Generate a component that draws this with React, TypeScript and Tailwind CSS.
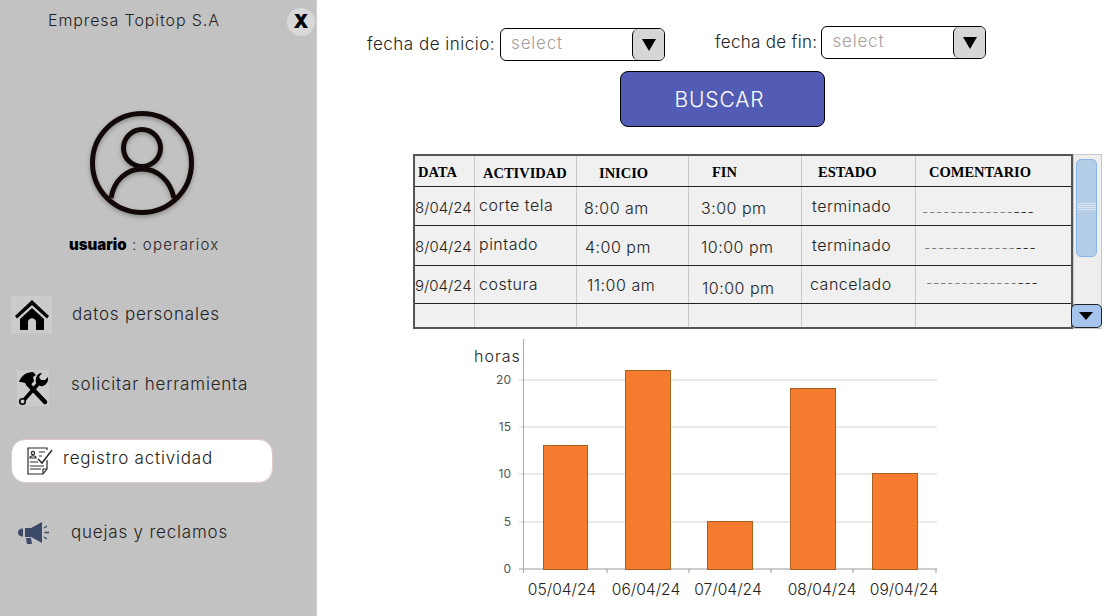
const font = "font-['Inter',sans-serif]";

const rows = [
  { date: "8/04/24", act: "corte tela", ini: "8:00 am", fin: "3:00 pm", est: "terminado", h: "h-[39px]", dash: "pl-[6px] pt-[10px]", actPos: "pl-[4px] pb-[2px]", iniPos: "pl-[7px] pt-[4px]", finPos: "pl-[12px] pt-[4px]", estPos: "pl-[10px]" },
  { date: "8/04/24", act: "pintado", ini: "4:00 pm", fin: "10:00 pm", est: "terminado", h: "h-[40px]", dash: "pl-[8px] pt-[4px]", actPos: "pl-[4px] pb-[4px]", iniPos: "pl-[8px] pt-[2px]", finPos: "pl-[12px] pt-[2px]", estPos: "pl-[10px] pb-[1px]" },
  { date: "9/04/24", act: "costura", ini: "11:00 am", fin: "10:00 pm", est: "cancelado", h: "h-[38px]", dash: "pl-[10px] pb-[4px]", actPos: "pl-[4px] pb-[2px]", iniPos: "pl-[10px] pt-[1px]", finPos: "pl-[13px] pt-[6px]", estPos: "pl-[8px] pb-[2px]" },
];

const cols = "grid grid-cols-[60px_102px_112px_113px_114px_1fr]";
const cell = "border-r border-[#c9c9c9] flex items-center";

function HomeIcon() {
  return (
    <svg viewBox="0 0 36 32" className="w-[36px] h-[32px]">
      <path d="M18 1 L1 17 L3 19.5 L18 6 L33 19.5 L35 17 Z" fill="#000" />
      <path d="M6 20 L18 9 L30 20 V31 H22 V23 C22 18 14 18 14 23 V31 H6 Z" fill="#000" />
    </svg>
  );
}

function ToolsIcon() {
  return (
    <svg viewBox="0 0 32 36" className="w-[32px] h-[36px]">
      <path d="M11 14 L28 32" stroke="#000" strokeWidth="4.5" strokeLinecap="round" />
      <path d="M2 12 C4 6 9 2 16 2 L19 5 L16 7 L17 11 L12 17 L8 13 C6 12 4 12 2 12 Z" fill="#000" />
      <path d="M7 30 L22 13" stroke="#000" strokeWidth="3.6" strokeLinecap="round" />
      <circle cx="5.5" cy="31.5" r="2.8" fill="#cbcbcb" stroke="#000" strokeWidth="1.6" />
      <path d="M25 3 L22 7 L24 10 L28 10 L31 7 C32 12 28 17 23 16 L19 13 C18 8 20 3 25 3 Z" fill="#000" />
    </svg>
  );
}

function DocIcon() {
  return (
    <svg viewBox="0 0 26 28" className="w-[26px] h-[28px]" fill="none" stroke="#2b2b2b" strokeWidth="1.2">
      <path d="M20 13 V22 L16 27 H1 V1 H20 V3" />
      <path d="M16 27 V22 H20" />
      <circle cx="6" cy="6" r="1.6" />
      <path d="M3 11 C3 8 9 8 9 11 Z" />
      <path d="M12 5 H18 M12 9 H15 M3 15 H11 M3 19 H17 M3 22 H14" />
      <path d="M11 12 L15 16 L25 3" strokeWidth="1.5" />
    </svg>
  );
}

function HornIcon() {
  return (
    <svg viewBox="0 0 32 24" className="w-[32px] h-[24px]" fill="#3a4a68">
      <path d="M8 7 H14 L25 1 V22 L14 16 H8 Z" />
      <path d="M6 7.5 V15.5 C2 15.5 1 13 1 11.5 C1 10 2 7.5 6 7.5 Z" />
      <path d="M9 17 H14 L15 23 H10 Z" />
      <path d="M27 7 L30 5 M27.5 11.5 H32 M27 16 L30 18" stroke="#3a4a68" strokeWidth="1.3" />
    </svg>
  );
}

function SelectBox({ className }: { className: string }) {
  return (
    <div className={`flex w-[165px] h-[33px] rounded-[6px] border border-black bg-white overflow-hidden ${className}`}>
      <span className="flex-1 pl-[10px] text-[17px] leading-[29px] text-[#a89c9c] font-light tracking-[0.8px]">select</span>
      <span className="w-[32px] bg-[#d6d6d6] border-l border-black rounded-l-[6px] flex items-center justify-center">
        <svg viewBox="0 0 14 12" className="w-[14px] h-[12px]">
          <path d="M0 0 H14 L7 12 Z" fill="#000" />
        </svg>
      </span>
    </div>
  );
}

function Chart() {
  const ticks = [
    { v: "20", y: 380 },
    { v: "15", y: 427 },
    { v: "10", y: 474 },
    { v: "5", y: 522 },
    { v: "0", y: 569 },
  ];
  const bars = [
    { x: 543, w: 44, top: 445 },
    { x: 625, w: 45, top: 370 },
    { x: 707, w: 45, top: 521 },
    { x: 790, w: 45, top: 388 },
    { x: 872, w: 45, top: 473 },
  ];
  const labels = [
    { t: "05/04/24", x: 562 },
    { t: "06/04/24", x: 646 },
    { t: "07/04/24", x: 728 },
    { t: "08/04/24", x: 822 },
    { t: "09/04/24", x: 904 },
  ];
  return (
    <svg viewBox="465 335 490 271" className="w-[490px] h-[271px]">
      {ticks.map((t) => (
        <g key={t.v}>
          <line x1="519" x2="937" y1={t.y} y2={t.y} stroke={t.v === "0" ? "#9a9a9a" : "#d4d4d4"} strokeWidth="1" />
          <text x="511" y={t.y + 4} textAnchor="end" fontSize="12" fill="#555" fontFamily="Inter, sans-serif">{t.v}</text>
        </g>
      ))}
      <line x1="523.5" x2="523.5" y1="339" y2="573" stroke="#a8a8a8" />
      {[607, 689, 771, 853, 936].map((x) => (
        <line key={x} x1={x} x2={x} y1="569" y2="573" stroke="#9a9a9a" />
      ))}
      {bars.map((b) => (
        <rect key={b.x} x={b.x + 0.5} y={b.top + 0.5} width={b.w} height={569 - b.top} fill="#f57c2e" stroke="#a9601f" />
      ))}
      <text x="474" y="362" fontSize="16" letterSpacing="1" fill="#222" fontWeight="300" fontFamily="Inter, sans-serif">horas</text>
      {labels.map((l) => (
        <text key={l.t} x={l.x} y="595" textAnchor="middle" fontSize="15.6" fill="#222" fontWeight="300" fontFamily="Inter, sans-serif">{l.t}</text>
      ))}
    </svg>
  );
}

export default function App() {
  return (
    <div className={`flex w-[1111px] h-[616px] overflow-hidden bg-white text-[#222] ${font}`}>
      <aside className="relative w-[317px] shrink-0 h-full bg-[#c2c2c2] border-r border-[#d0d0d0] flex flex-col">
        <h1 className="pl-[48px] pt-[10px] text-[16px] leading-[20px] font-light tracking-[0.9px] whitespace-nowrap">Empresa Topitop S.A</h1>
        <button className="absolute left-[287px] top-[8px] w-[28px] h-[28px] rounded-full bg-[#d8d8d8] text-black font-black text-[19px] leading-[28px]">X</button>
        <div className="flex mt-[81px] pl-[90px]">
          <svg viewBox="0 0 104 106" className="w-[104px] h-[106px] drop-shadow-[0_2px_2px_rgba(0,0,0,0.3)]" fill="none" stroke="#120808" strokeWidth="5">
            <circle cx="52" cy="52" r="49.5" />
            <circle cx="52" cy="37" r="18.5" />
            <path d="M21 87 C24 69 37 58 52 58 C67 58 80 69 84 87" />
          </svg>
        </div>
        <div className="mt-[18px] pl-[69px] text-[15px] leading-[20px] font-light tracking-[1.2px] whitespace-nowrap">
          <b className="font-black text-black tracking-normal">usuario</b> : operariox
        </div>
        <nav className="mt-[41px] flex flex-col">
          <div className="flex items-center h-[38px] pl-[11px]">
            <span className="w-[41px] h-[38px] bg-[#cbcbcb] flex items-center justify-center"><HomeIcon /></span>
            <span className="ml-[20px] text-[17px] font-light tracking-[0.8px]">datos personales</span>
          </div>
          <div className="flex items-center h-[36px] mt-[36px] pl-[17px]">
            <span className="w-[32px] h-[36px] bg-[#cbcbcb] flex items-center justify-center"><ToolsIcon /></span>
            <span className="ml-[22px] pb-[6px] text-[17px] font-light tracking-[0.8px]">solicitar herramienta</span>
          </div>
          <div className="flex items-start h-[44px] w-[262px] mt-[33px] ml-[11px] pl-[15px] pt-[7px] bg-white rounded-[14px] border border-[#e0c8c8]">
            <DocIcon />
            <span className="ml-[10px] pt-[1px] text-[17px] leading-[20px] font-light tracking-[0.8px]">registro actividad</span>
          </div>
          <div className="flex items-center h-[24px] mt-[38px] pl-[17px]">
            <HornIcon />
            <span className="ml-[22px] text-[17px] font-light tracking-[0.8px]">quejas y reclamos</span>
          </div>
        </nav>
      </aside>

      <main className="flex-1 min-w-0 flex flex-col">
        <div className="flex items-start pt-[26px] pl-[50px] text-[17px] font-light tracking-[0.5px] whitespace-nowrap">
          <span className="mt-[6px]">fecha de inicio:</span>
          <SelectBox className="ml-[5px] mt-[2px]" />
          <span className="ml-[50px] mt-[4px] tracking-[0.3px]">fecha de fin:</span>
          <SelectBox className="ml-[4px]" />
        </div>
        <button className="self-start ml-[303px] mt-[10px] w-[205px] h-[56px] rounded-[8px] bg-[#525cb5] border border-black text-white text-[21px] font-light tracking-[0.9px] pr-[6px] pt-[2px]">
          BUSCAR
        </button>

        <div className="flex ml-[96px] mt-[27px] h-[175px]">
          <div className="w-[660px] h-full bg-[#f0f0f0] border-2 border-[#555] flex flex-col">
            <div className={`${cols} h-[31px] border-b border-[#222] text-[14.5px] font-bold text-black font-['Liberation_Serif',serif]`}>
              <div className={`${cell} pl-[3px] pt-[3px]`}>DATA</div>
              <div className={`${cell} pl-[8px] pt-[6px]`}>ACTIVIDAD</div>
              <div className={`${cell} pl-[22px] pt-[6px]`}>INICIO</div>
              <div className={`${cell} pl-[23px] pt-[4px]`}>FIN</div>
              <div className={`${cell} pl-[16px] pt-[4px]`}>ESTADO</div>
              <div className="flex items-center pl-[13px] pt-[4px]">COMENTARIO</div>
            </div>
            {rows.map((r) => (
              <div key={r.act} className={`${cols} ${r.h} border-b border-[#222] text-[16px] font-light tracking-[0.5px]`}>
                <div className={`${cell} pt-[4px] whitespace-nowrap tracking-normal text-[15px]`}>{r.date}</div>
                <div className={`${cell} ${r.actPos}`}>{r.act}</div>
                <div className={`${cell} ${r.iniPos}`}>{r.ini}</div>
                <div className={`${cell} ${r.finPos}`}>{r.fin}</div>
                <div className={`${cell} ${r.estPos}`}>{r.est}</div>
                <div className={`flex items-center tracking-[0.7px] text-[14px] whitespace-nowrap overflow-hidden ${r.dash}`}>
                  <span className="text-[#777]">-------------</span>
                  <span className="text-[#222]">---</span>
                </div>
              </div>
            ))}
            <div className={`${cols} flex-1`}>
              <div className={cell} />
              <div className={cell} />
              <div className={cell} />
              <div className={cell} />
              <div className={cell} />
              <div />
            </div>
          </div>
          <div className="w-[29px] h-full bg-[#eeeeee] border border-[#c8c8c8] flex flex-col items-center pt-[4px]">
            <div className="w-[21px] h-[98px] mr-[3px] bg-[#b4cee8] border border-[#8ab4ec] rounded-[5px] flex flex-col justify-center gap-[1px] pb-[3px]">
              <span className="h-[1px] bg-[#dbe6f2]" />
              <span className="h-[1px] bg-[#dbe6f2]" />
              <span className="h-[1px] bg-[#dbe6f2]" />
              <span className="h-[1px] bg-[#dbe6f2]" />
            </div>
            <div className="mt-auto -ml-[3px] w-[31px] h-[24px] shrink-0 bg-[#a5c4ee] border border-[#222] rounded-[5px] flex items-center justify-center">
              <svg viewBox="0 0 14 8" className="w-[14px] h-[8px]">
                <path d="M0 0 H14 L7 8 Z" fill="#000" />
              </svg>
            </div>
          </div>
        </div>

        <div className="ml-[148px] mt-[6px]">
          <Chart />
        </div>
      </main>
    </div>
  );
}
